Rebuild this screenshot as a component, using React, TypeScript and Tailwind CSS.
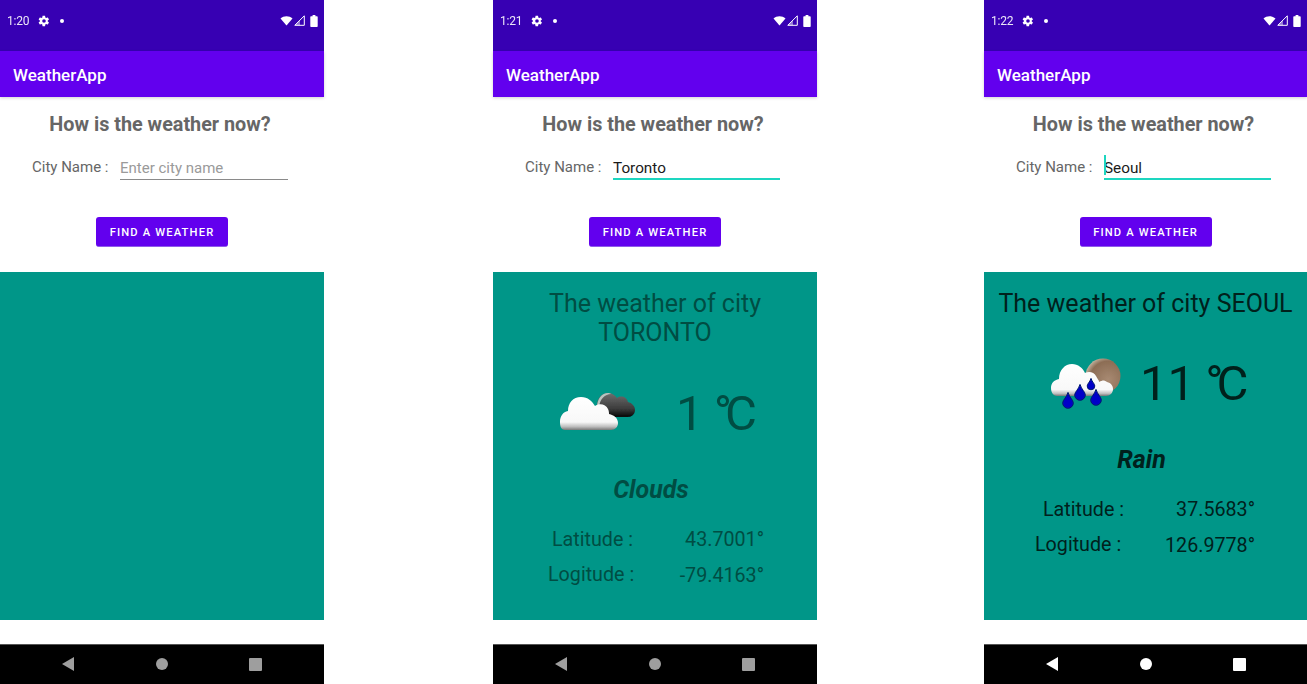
import React from 'react'

const font = { fontFamily: 'Roboto, "Noto Sans CJK SC", sans-serif' }

const Gear = () => (
  <svg width="12" height="12" viewBox="0 0 24 24" fill="#fff">
    <path d="M19.4 13c.04-.32.1-.66.1-1s-.06-.68-.1-1l2.2-1.7c.2-.15.25-.43.12-.66l-2.1-3.6c-.13-.23-.4-.3-.63-.23l-2.6 1c-.54-.4-1.12-.76-1.76-1L14.2 2.1c-.04-.24-.25-.42-.5-.42H9.5c-.25 0-.46.18-.5.42l-.4 2.7c-.63.26-1.2.6-1.75 1l-2.6-1c-.24-.1-.5 0-.63.22l-2.1 3.6c-.13.23-.07.5.12.67L3.8 11c-.04.33-.1.67-.1 1s.06.67.1 1l-2.2 1.7c-.2.15-.25.43-.12.66l2.1 3.6c.13.23.4.3.63.23l2.6-1c.54.4 1.12.76 1.76 1l.4 2.7c.04.24.25.42.5.42h4.2c.25 0 .46-.18.5-.42l.4-2.7c.63-.26 1.2-.6 1.75-1l2.6 1c.24.1.5 0 .63-.22l2.1-3.6c.13-.23.07-.5-.12-.67L19.4 13zM12 15.6a3.6 3.6 0 1 1 0-7.2 3.6 3.6 0 0 1 0 7.2z" />
  </svg>
)

const SystemIcons = () => (
  <div className="ml-auto mr-[6px] flex items-center">
    <svg width="13" height="10" viewBox="0 0 13 10" fill="#fff">
      <path d="M0.5 2.6C2.2 1 4.2 0.2 6.5 0.2s4.3.8 6 2.4L6.5 9.6z" />
    </svg>
    <svg width="11" height="11" viewBox="0 0 11 11" className="ml-[1px]">
      <path d="M10.3 0.8V10.3H0.8z" fill="none" stroke="#fff" strokeWidth="1" />
      <path d="M6 5.2V10.3H0.8z" fill="#fff" opacity="0.45" />
    </svg>
    <svg width="8" height="12" viewBox="0 0 8 12" fill="#fff" className="ml-[5px]">
      <path d="M2.6 0h2.8v1.2H7c.4 0 .7.3.7.7v9.4c0 .4-.3.7-.7.7H1c-.4 0-.7-.3-.7-.7V1.9c0-.4.3-.7.7-.7h1.6z" />
    </svg>
  </div>
)

const CloudsIcon = () => (
  <svg width="78" height="40" viewBox="0 0 78 40" className="mb-[4px] block">
    <defs>
      <linearGradient id="cl-white" x1="0" y1="0" x2="0" y2="1">
        <stop offset="0" stopColor="#ffffff" />
        <stop offset="0.76" stopColor="#f8f8f8" />
        <stop offset="0.9" stopColor="#bdbdbd" />
        <stop offset="1" stopColor="#787878" />
      </linearGradient>
      <linearGradient id="cl-dark" x1="0" y1="0" x2="0" y2="1">
        <stop offset="0" stopColor="#6f6f6f" />
        <stop offset="0.65" stopColor="#3c3c3c" />
        <stop offset="1" stopColor="#050505" />
      </linearGradient>
      <filter id="cl-blur"><feGaussianBlur stdDeviation="0.7" /></filter>
    </defs>
    <g filter="url(#cl-blur)">
      <path d="M38 14C38 6 43 1 49 1C53 1 56 3 58 6C62 3 68 5 69 10C73 11 76 14 76 18C76 22 73 25 69 25L50 25Z" fill="url(#cl-dark)" />
      <path d="M38 15C38 7 43 1 49 1C50 1 51 1 52 2C46 2 41 7 40 15Z" fill="#b9c4c0" />
      <path d="M6 38C2 38 1 34 1 30C1 24 4 20 9 19C9 11 14 5 22 5C29 5 33 9 36 14C40 11 47 12 49 17C50 19 50 21 50 22C55 23 59 26 59 31C59 35 56 38 52 38Z" fill="url(#cl-white)" />
    </g>
  </svg>
)

const Drop = ({ x, y, s }: { x: number; y: number; s: number }) => (
  <path
    d={`M${x} ${y - s * 2}C${x + s * 0.3} ${y - s} ${x + s} ${y - s * 0.6} ${x + s} ${y}A${s} ${s} 0 1 1 ${x - s} ${y}C${x - s} ${y - s * 0.6} ${x - s * 0.3} ${y - s} ${x} ${y - s * 2}z`}
    fill="#0000c8"
    stroke="#001a70"
    strokeWidth="1"
  />
)

const RainIcon = () => (
  <svg width="72" height="52" viewBox="0 0 72 52" className="block">
    <defs>
      <linearGradient id="rn-white" x1="0" y1="0" x2="0" y2="1">
        <stop offset="0" stopColor="#ffffff" />
        <stop offset="0.8" stopColor="#f8f8f8" />
        <stop offset="0.92" stopColor="#c0c0c0" />
        <stop offset="1" stopColor="#767676" />
      </linearGradient>
      <radialGradient id="rn-sun" cx="0.65" cy="0.6" r="0.7">
        <stop offset="0" stopColor="#a88a72" />
        <stop offset="0.75" stopColor="#8c6d55" />
        <stop offset="1" stopColor="#c9bca8" />
      </radialGradient>
      <filter id="rn-blur"><feGaussianBlur stdDeviation="0.6" /></filter>
    </defs>
    <g filter="url(#rn-blur)">
      <circle cx="53" cy="18" r="17.5" fill="url(#rn-sun)" />
      <path d="M7 38C3 38 1 34 1 30C1 25 4 22 9 21C9 12 15 6 22 6C28 6 33 10 35 15C39 13 44 14 46 18C48 22 49 22 49 24C53 22 54 22 57 24C61 25 63 28 63 31C63 35 60 38 56 38Z" fill="url(#rn-white)" />
      <Drop x={30} y={37} s={5.3} />
      <Drop x={41} y={28} s={3.8} />
      <Drop x={46} y={42} s={5.3} />
      <Drop x={18} y={45} s={5.3} />
    </g>
  </svg>
)

const Phone = ({
  time,
  widthClass,
  marginClass,
  navColor,
  field,
  children,
}: {
  time: string
  widthClass: string
  marginClass: string
  navColor: string
  field: React.ReactNode
  children?: React.ReactNode
}) => (
  <div className={`${widthClass} ${marginClass} flex h-[684px] shrink-0 flex-col bg-white`} style={font}>
    <div className="flex h-[51px] items-center bg-[#3700b3] pb-[10px] pl-[7px] text-white">
      <span className="w-[25px] text-[12px] tracking-[-0.2px] opacity-90">{time}</span>
      <span className="ml-[6px] flex"><Gear /></span>
      <span className="ml-[10px] h-[4px] w-[4px] rounded-full bg-white" />
      <SystemIcons />
    </div>
    <div className="flex h-[46px] items-center bg-[#6200ee] pt-[4px] pl-[13px] text-[17px] font-medium text-white shadow-[0_1px_3px_rgba(0,0,0,0.18)]">
      WeatherApp
    </div>
    <div className="flex h-[175px] flex-col items-center">
      <h1 className="mt-[16px] h-[24px] pr-[4px] text-[19.8px] leading-[24px] font-bold text-[#666666]">How is the weather now?</h1>
      <div className="mt-[19px] flex h-[24px] w-full items-end pl-[32px]">
        <span className="mb-[3px] w-[88px] text-[15px] leading-[20px] text-[#666666]">City Name :</span>
        {field}
      </div>
      <button className="mt-[37px] h-[30px] w-[132px] rounded-[3px] border-b border-[#8f5bea] bg-[#6200ee] pt-[4px] text-[11.2px] font-medium tracking-[1.15px] text-white">
        FIND A WEATHER
      </button>
    </div>
    <div className="h-[348px] bg-[#009688]">{children}</div>
    <div className="h-[24px] bg-white" />
    <div className="flex h-[40px] items-center border-t border-[#555555] bg-black pb-[1px]">
      <svg width="12" height="14" viewBox="0 0 12 14" fill={navColor} className="ml-[62px]">
        <path d="M12 0V14L0 7z" />
      </svg>
      <span className="ml-[82px] h-[12px] w-[12px] rounded-full" style={{ backgroundColor: navColor }} />
      <span className="ml-[81px] h-[13px] w-[13px] rounded-[1px]" style={{ backgroundColor: navColor }} />
    </div>
  </div>
)

const Row = ({ label, value, className, valueClass }: { label: string; value: string; className: string; valueClass?: string }) => (
  <div className={`flex h-[28px] items-center text-[19.7px] leading-[28px] ${className}`}>
    <span>{label}</span>
    <span className={`ml-auto ${valueClass ?? ''}`}>{value}</span>
  </div>
)

export default function App() {
  return (
    <div className="flex h-[684px] w-[1307px] overflow-hidden bg-white">
      <Phone
        time="1:20"
        widthClass="w-[324px]"
        marginClass="ml-0"
        navColor="#9e9e9e"
        field={
          <div className="h-[24px] w-[168px] border-b border-[#8a8a8a] text-[15px] leading-[24px] text-[#9a9a9a]">Enter city name</div>
        }
      />
      <Phone
        time="1:21"
        widthClass="w-[324px]"
        marginClass="ml-[169px]"
        navColor="#9e9e9e"
        field={
          <div className="h-[24px] w-[167px] border-b-2 border-[#1dd6c0] text-[15.3px] leading-[24px] text-[#1a1a1a]">Toronto</div>
        }
      >
        <div className="flex h-full flex-col text-[#004d43]">
          <div className="mt-[17px] text-center text-[25px] leading-[29px]">
            The weather of city
            <br />
            TORONTO
          </div>
          <div className="mt-[37px] flex h-[60px] items-center pl-[66px]">
            <CloudsIcon />
            <span className="ml-[39px] text-[49px] leading-[60px]">
              1 <span className="ml-[-2px] tracking-[-7px]">°</span>C
            </span>
          </div>
          <div className="mt-[31px] pr-[8px] text-center text-[25px] leading-[30px] font-bold italic">Clouds</div>
          <Row label="Latitude :" value="43.7001°" className="mt-[21px] pr-[53px] pl-[59px]" />
          <Row label="Logitude :" value="-79.4163°" className="mt-[7px] pr-[53px] pl-[55px]" valueClass="mt-[2px]" />
        </div>
      </Phone>
      <Phone
        time="1:22"
        widthClass="w-[323px]"
        marginClass="ml-[167px]"
        navColor="#ffffff"
        field={
          <div className="relative h-[24px] w-[167px] border-b-2 border-[#1dd6c0] text-[15.3px] leading-[24px] text-[#1a1a1a]">
            Seoul
            <span className="absolute top-[-1px] left-0 h-[20px] w-[2px] bg-[#1dd6c0]" />
          </div>
        }
      >
        <div className="flex h-full flex-col text-[#00211c]">
          <div className="mt-[17px] text-center text-[25px] leading-[29px]">The weather of city SEOUL</div>
          <div className="mt-[36px] flex h-[60px] items-center pl-[66px]">
            <RainIcon />
            <span className="ml-[18px] text-[49px] leading-[60px]">
              11 <span className="ml-[-2px] tracking-[-7px]">°</span>C
            </span>
          </div>
          <div className="mt-[31px] pr-[8px] text-center text-[25px] leading-[30px] font-bold italic">Rain</div>
          <Row label="Latitude :" value="37.5683°" className="mt-[21px] pr-[52px] pl-[59px]" />
          <Row label="Logitude :" value="126.9778°" className="mt-[7px] pr-[52px] pl-[51px]" valueClass="mt-[2px]" />
        </div>
      </Phone>
    </div>
  )
}
